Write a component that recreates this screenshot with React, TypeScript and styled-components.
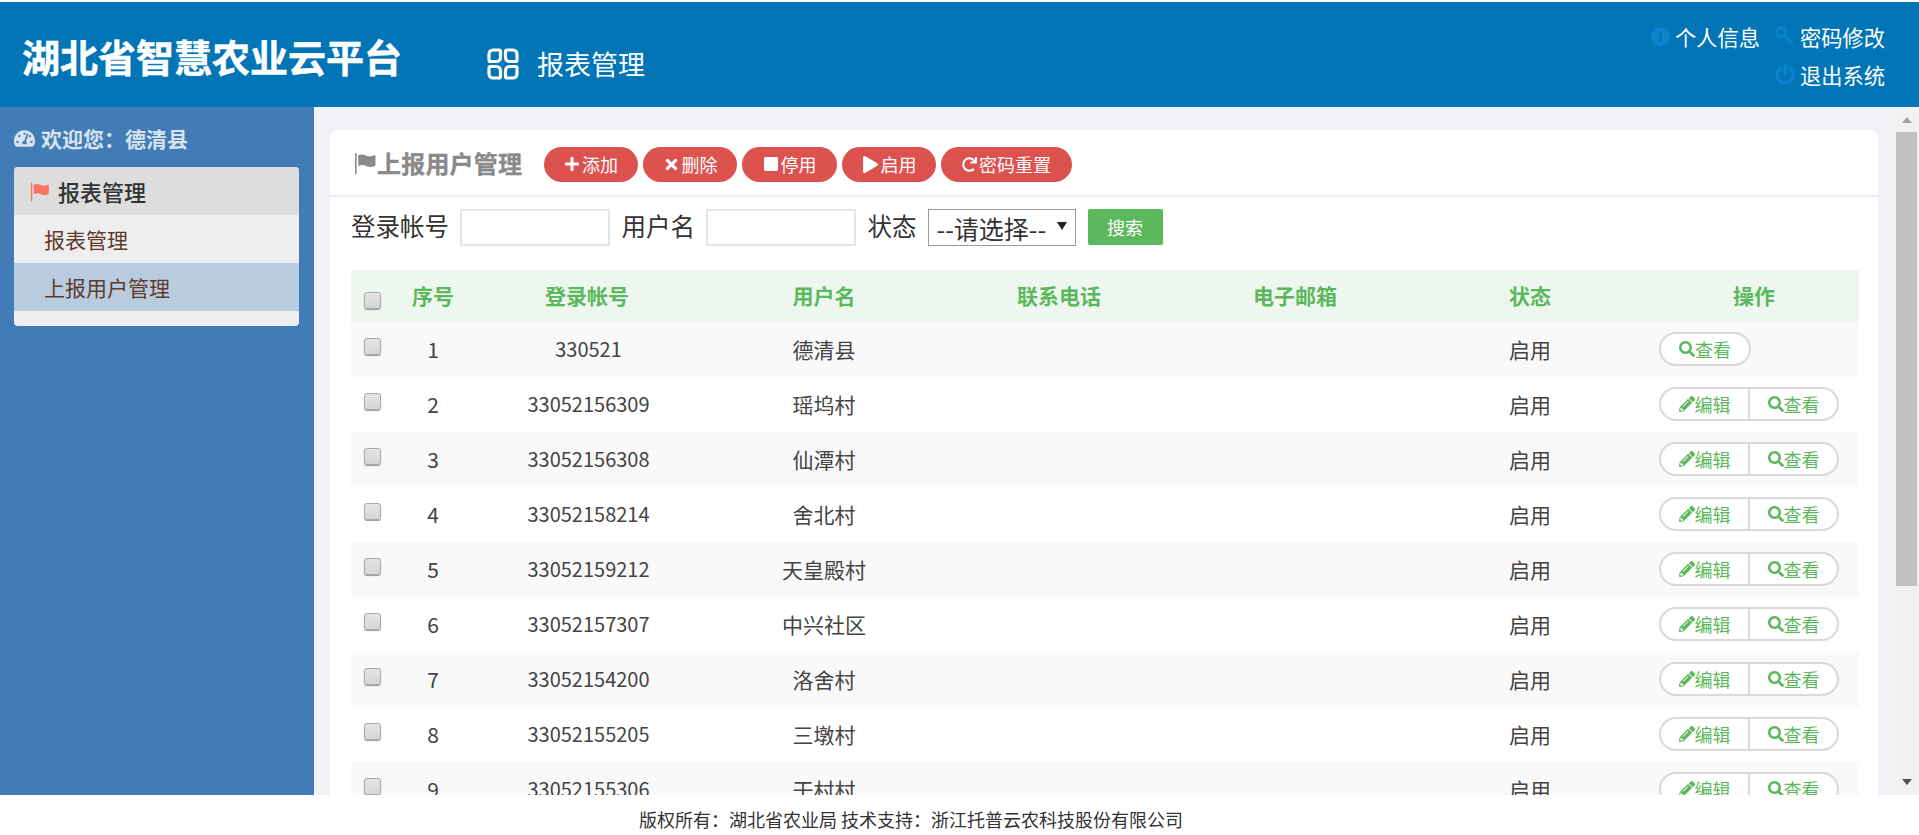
import styled, { createGlobalStyle } from "styled-components";
import {
  FaTachometerAlt,
  FaInfoCircle,
  FaPlus,
  FaTimes,
  FaStop,
  FaPlay,
  FaRedo,
  FaSearch,
  FaPencilAlt,
} from "react-icons/fa";
import { ReactNode } from "react";

const GlobalStyle = createGlobalStyle`
  html, body {
    margin: 0;
    height: 100%;
    overflow: hidden;
    background: #fff;
    font-family: "Noto Sans CJK SC", "Liberation Sans", sans-serif;
  }
  * { box-sizing: border-box; }
`;

type Row = { id: number; account: string; name: string; readonly?: boolean };

const rows: Row[] = [
  { id: 1, account: "330521", name: "德清县", readonly: true },
  { id: 2, account: "33052156309", name: "瑶坞村" },
  { id: 3, account: "33052156308", name: "仙潭村" },
  { id: 4, account: "33052158214", name: "舍北村" },
  { id: 5, account: "33052159212", name: "天皇殿村" },
  { id: 6, account: "33052157307", name: "中兴社区" },
  { id: 7, account: "33052154200", name: "洛舍村" },
  { id: 8, account: "33052155205", name: "三墩村" },
  { id: 9, account: "33052155306", name: "干村村" },
];

const columns = [50, 64, 244, 230, 240, 232, 238, 210];

const FlagIcon = ({ size = 24 }: { size?: number }) => (
  <svg width={size} height={size} viewBox="0 0 24 24" fill="currentColor">
    <rect x="1" y="2" width="1.6" height="21" />
    <path d="M4 4.5c3-1.6 5.5-1.2 8 0s5 1.2 8-.2c.8-.3 1.5 0 1.5.8V14c0 .5-.2.8-.7 1-3 1.4-5.8 1.3-8.5 0s-5-1.3-7.8.3z" />
  </svg>
);

const leaf = "M2 6.5C2 3.5 3.5 2 6.5 2H12C13 2 13.5 2.5 13.5 3.5V9C13.5 12 12 13.5 9 13.5H3.5C2.5 13.5 2 13 2 12Z";

const LeavesIcon = () => (
  <svg width="32" height="32" viewBox="0 0 32 32" fill="none" stroke="#fff" strokeWidth="3.2">
    <path d={leaf} />
    <path d={leaf} transform="matrix(-1 0 0 1 32 0)" />
    <path d={leaf} transform="matrix(1 0 0 -1 0 32)" />
    <path d={leaf} transform="matrix(-1 0 0 -1 32 32)" />
  </svg>
);

const KeyIcon = () => (
  <svg width="20" height="20" viewBox="0 0 20 20" fill="none" stroke="currentColor" strokeWidth="3">
    <circle cx="6.2" cy="6.2" r="4.6" />
    <path d="M9.6 9.6l8.6 8.2M14.6 14.4l-2.4 2.4" />
  </svg>
);

const PowerIcon = () => (
  <svg width="20" height="20" viewBox="0 0 20 20" fill="none" stroke="currentColor" strokeWidth="3" strokeLinecap="round">
    <path d="M5.4 4.4a8 8 0 1 0 9.2 0" />
    <path d="M10 1.5v8" />
  </svg>
);

const App = () => {
  return (
    <>
      <GlobalStyle />
      <Page>
        <Header>
          <Brand>湖北省智慧农业云平台</Brand>
          <Module>
            <LeavesIcon />
            <span>报表管理</span>
          </Module>
          <UserLinks>
            <UserRow>
              <UserLink>
                <FaInfoCircle size={19} />
                <span>个人信息</span>
              </UserLink>
              <UserLink>
                <KeyIcon />
                <span>密码修改</span>
              </UserLink>
            </UserRow>
            <UserRow>
              <UserLink>
                <PowerIcon />
                <span>退出系统</span>
              </UserLink>
            </UserRow>
          </UserLinks>
        </Header>

        <Main>
          <Sidebar>
            <Welcome>
              <FaTachometerAlt size={21} />
              <span>欢迎您：德清县</span>
            </Welcome>
            <Menu>
              <MenuHead>
                <FlagIcon size={21} />
                <span>报表管理</span>
              </MenuHead>
              <MenuItem>报表管理</MenuItem>
              <MenuItem $active>上报用户管理</MenuItem>
            </Menu>
          </Sidebar>

          <Content>
            <Card>
              <CardHead>
                <CardTitle>
                  <FlagIcon size={24} />
                  <span>上报用户管理</span>
                </CardTitle>
                <Toolbar>
                  <RedButton $width={94}><FaPlus size={16} />添加</RedButton>
                  <RedButton $width={94}><FaTimes size={17} />删除</RedButton>
                  <RedButton $width={95}><FaStop size={16} />停用</RedButton>
                  <RedButton $width={94}><FaPlay size={17} />启用</RedButton>
                  <RedButton $width={131}><FaRedo size={15} />密码重置</RedButton>
                </Toolbar>
              </CardHead>

              <Filters>
                <FilterLabel>登录帐号</FilterLabel>
                <TextInput />
                <FilterLabel>用户名</FilterLabel>
                <TextInput />
                <FilterLabel>状态</FilterLabel>
                <SelectWrap>
                  <StatusSelect defaultValue="">
                    <option value="">--请选择--</option>
                  </StatusSelect>
                </SelectWrap>
                <SearchButton>搜索</SearchButton>
              </Filters>

              <Table>
                <colgroup>
                  {columns.map((w, i) => (
                    <col key={i} style={{ width: w }} />
                  ))}
                </colgroup>
                <thead>
                  <tr>
                    <HeadCheckCell><Check type="checkbox" /></HeadCheckCell>
                    <HeadCell>序号</HeadCell>
                    <HeadCell>登录帐号</HeadCell>
                    <HeadCell>用户名</HeadCell>
                    <HeadCell>联系电话</HeadCell>
                    <HeadCell>电子邮箱</HeadCell>
                    <HeadCell>状态</HeadCell>
                    <HeadCell>操作</HeadCell>
                  </tr>
                </thead>
                <tbody>
                  {rows.map((r) => (
                    <BodyRow key={r.id}>
                      <CheckCell><Check type="checkbox" /></CheckCell>
                      <Cell>{r.id}</Cell>
                      <AccountCell>{r.account}</AccountCell>
                      <Cell>{r.name}</Cell>
                      <Cell />
                      <Cell />
                      <Cell>启用</Cell>
                      <ActionCell>
                        <ActionGroup>
                          {!r.readonly && (
                            <Action icon={<FaPencilAlt size={16} />}>编辑</Action>
                          )}
                          <Action icon={<FaSearch size={16} />}>查看</Action>
                        </ActionGroup>
                      </ActionCell>
                    </BodyRow>
                  ))}
                </tbody>
              </Table>
            </Card>
          </Content>

          <ScrollRail>
            <ScrollUp />
            <ScrollThumb />
            <ScrollDown />
          </ScrollRail>
        </Main>

        <Footer>版权所有：湖北省农业局 技术支持：浙江托普云农科技股份有限公司</Footer>
      </Page>
    </>
  );
};

const Action = ({ icon, children }: { icon: ReactNode; children: ReactNode }) => (
  <ActionButton>
    {icon}
    <span>{children}</span>
  </ActionButton>
);

export default App;

const Page = styled.div`
  height: 835px;
  padding-top: 2px;
  display: flex;
  flex-direction: column;
  overflow: hidden;
`;

const Header = styled.header`
  height: 105px;
  flex: none;
  background: #0275b7;
  color: #fff;
  display: flex;
  align-items: flex-start;
  padding-left: 22px;
`;

const Brand = styled.div`
  font-size: 38px;
  font-weight: 700;
  -webkit-text-stroke: 0.5px #fff;
  line-height: 108px;
  width: 465px;
  height: 105px;
`;

const Module = styled.div`
  display: flex;
  align-items: center;
  gap: 18px;
  font-size: 27px;
  height: 105px;
  padding-top: 19px;

  svg { flex: none; }
  span { margin-bottom: 2px; }
`;

const UserLinks = styled.div`
  margin-left: auto;
  padding-right: 34px;
  display: flex;
  flex-direction: column;
  align-items: flex-end;
  padding-top: 15px;
`;

const UserRow = styled.div`
  display: flex;
  gap: 15px;
  height: 38px;
  align-items: center;
`;

const UserLink = styled.a`
  display: flex;
  align-items: center;
  gap: 5px;
  font-size: 21.25px;
  color: #fff;

  svg { color: #0a84cf; flex: none; }
`;

const Main = styled.main`
  height: 688px;
  flex: none;
  display: flex;
  background: #f0f2f7;
  overflow: hidden;
`;

const Sidebar = styled.aside`
  width: 314px;
  flex: none;
  background: #417cb6;
  padding: 0 15px 0 14px;
`;

const Welcome = styled.div`
  height: 60px;
  padding-top: 2px;
  display: flex;
  align-items: center;
  gap: 6px;
  font-size: 21px;
  font-weight: 700;
  color: #d8e3ee;
`;

const Menu = styled.nav`
  border-radius: 4px;
  overflow: hidden;
  background: #eee;
  padding-bottom: 15px;
`;

const MenuHead = styled.div`
  height: 48px;
  background: #ddd;
  display: flex;
  align-items: center;
  gap: 7px;
  padding-left: 16px;
  font-size: 22px;
  font-weight: 500;
  color: #333;

  svg { color: #ff7366; }
`;

const MenuItem = styled.div<{ $active?: boolean }>`
  height: 48px;
  line-height: 48px;
  padding-left: 30px;
  font-size: 21px;
  color: #5f3b2c;
  background: ${(p) => (p.$active ? "#b9cbdf" : "transparent")};
`;

const Content = styled.section`
  flex: 1;
  min-width: 0;
  padding: 23px 16px 0;
  overflow: hidden;
`;

const Card = styled.div`
  background: #fff;
  border-radius: 8px 8px 0 0;
  min-height: 100%;
`;

const CardHead = styled.div`
  height: 67px;
  border-bottom: 2px solid #eef1f5;
  display: flex;
  align-items: center;
  padding-left: 24px;
`;

const CardTitle = styled.div`
  display: flex;
  align-items: center;
  color: #8a8a8a;
  font-size: 24px;
  font-weight: 700;
  -webkit-text-stroke: 0.3px #8a8a8a;
  letter-spacing: 0.2px;
  width: 190px;

  svg { margin-right: -1px; }
`;

const Toolbar = styled.div`
  display: flex;
  gap: 5px;
  padding-top: 3px;
`;

const RedButton = styled.button<{ $width: number }>`
  width: ${(p) => p.$width}px;
  height: 35px;
  border: 0;
  border-radius: 18px;
  background: #dc524f;
  color: #fff;
  font: 18px "Noto Sans CJK SC", "Liberation Sans", sans-serif;
  display: flex;
  align-items: center;
  justify-content: center;
  gap: 2px;
  padding: 0;
`;

const Filters = styled.div`
  height: 73px;
  display: flex;
  align-items: flex-start;
  padding: 12px 0 0 21px;
`;

const FilterLabel = styled.label`
  font-size: 24.5px;
  line-height: 34px;
  color: #333;
  margin-right: 11px;
`;

const TextInput = styled.input`
  width: 150px;
  height: 37px;
  border: 2px solid #e5e5e5;
  outline: none;
  background: #fff;
  margin-right: 11.5px;
`;

const SelectWrap = styled.div`
  position: relative;
  margin-right: 12px;

  &::after {
    content: "";
    position: absolute;
    right: 9px;
    top: 13px;
    border: 5px solid transparent;
    border-bottom: 0;
    border-top: 8px solid #222;
  }
`;

const StatusSelect = styled.select`
  display: block;
  appearance: none;
  width: 148px;
  height: 37px;
  border: 1px solid #999;
  border-radius: 0;
  background: #fff;
  color: #333;
  font: 25px "Noto Sans CJK SC", "Liberation Sans", sans-serif;
  padding: 0 0 0 8px;
`;

const SearchButton = styled.button`
  width: 75px;
  height: 36px;
  border: 0;
  border-radius: 2px;
  background: #5cb85c;
  color: #fff;
  font: 18px "Noto Sans CJK SC", "Liberation Sans", sans-serif;
`;

const Table = styled.table`
  width: 1508px;
  margin-left: 21px;
  border-collapse: collapse;
  table-layout: fixed;

  thead tr {
    background: #eef7ef;
    height: 52px;
  }
`;

const BodyRow = styled.tr`
  height: 55px;

  &:nth-child(odd) { background: #f9f9f9; }
`;

const HeadCell = styled.th`
  padding: 0 0 2px;
  color: #5cb85c;
  font-size: 21px;
  font-weight: 700;
  text-align: center;
`;

const HeadCheckCell = styled.th`
  padding: 9px 0 0 13px;
  text-align: left;
`;

const Cell = styled.td`
  padding: 0 0 2px;
  color: #444;
  font-size: 21px;
  text-align: center;
`;

const AccountCell = styled(Cell)`
  font-size: 20px;
  padding-left: 3px;
`;

const CheckCell = styled.td`
  padding: 0 0 7px 13px;
  text-align: left;
`;

const Check = styled.input`
  appearance: none;
  display: block;
  margin: 0;
  width: 17px;
  height: 17px;
  border: 1px solid #aaa;
  border-radius: 3px;
  background: linear-gradient(#e4e4e4, #d6d6d6);
  box-shadow: 0 1px 1px #999;
`;

const ActionCell = styled.td`
  padding: 0 0 2px 10px;
`;

const ActionGroup = styled.div`
  display: inline-flex;
  vertical-align: middle;
  height: 34px;
  border: 2px solid #d9d9d9;
  border-radius: 17px;
  background: #fff;
  overflow: hidden;
`;

const ActionButton = styled.div`
  width: 88px;
  display: flex;
  align-items: center;
  justify-content: center;
  gap: 0;
  color: #5cb85c;
  font-size: 18px;

  &:first-child:not(:last-child) { width: 87px; }
  & + & { border-left: 2px solid #d9d9d9; width: 89px; }
`;

const ScrollRail = styled.div`
  width: 25px;
  flex: none;
  background: #f1f1f1;
  display: flex;
  flex-direction: column;
  align-items: center;
  padding-top: 10px;
`;

const ScrollUp = styled.div`
  width: 0;
  height: 0;
  border: 5.5px solid transparent;
  border-top: 0;
  border-bottom: 6px solid #a3a3a3;
`;

const ScrollThumb = styled.div`
  width: 21px;
  height: 454px;
  margin-top: 9px;
  background: #c1c1c1;
`;

const ScrollDown = styled.div`
  width: 0;
  height: 0;
  margin-top: auto;
  margin-bottom: 10px;
  border: 5.5px solid transparent;
  border-bottom: 0;
  border-top: 6px solid #505050;
`;

const Footer = styled.footer`
  height: 40px;
  flex: none;
  background: #fff;
  padding-left: 639px;
  line-height: 48px;
  font-size: 18px;
  color: #333;
`;
